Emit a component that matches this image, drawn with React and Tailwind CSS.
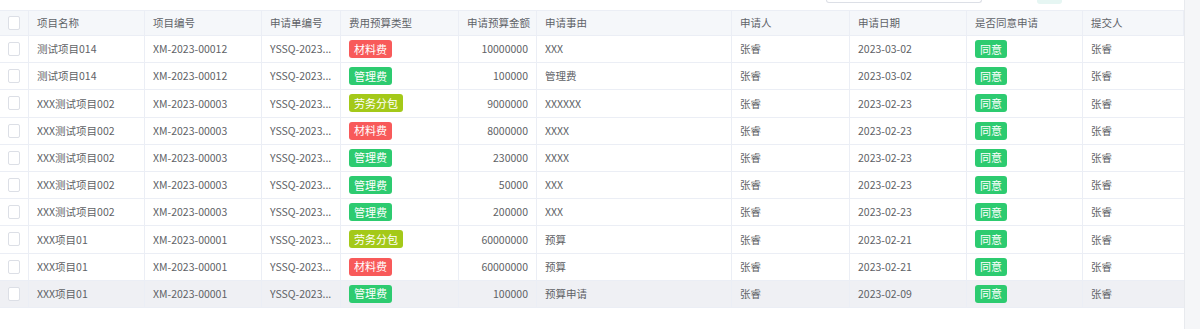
import React from 'react';

const COLS = 'grid grid-cols-[29px_116px_117px_79px_118px_78px_195px_118px_117px_116px_101px]';

const HEADERS = ['项目名称', '项目编号', '申请单编号', '费用预算类型', '申请预算金额', '申请事由', '申请人', '申请日期', '是否同意申请', '提交人'];

const TAG_STYLES = {
  材料费: 'bg-[#f85a5a]',
  管理费: 'bg-[#2dcb70]',
  劳务分包: 'bg-[#a4c919]',
};

const ROWS = [
  ['测试项目014', 'XM-2023-00012', '材料费', '10000000', 'XXX', '2023-03-02'],
  ['测试项目014', 'XM-2023-00012', '管理费', '100000', '管理费', '2023-03-02'],
  ['XXX测试项目002', 'XM-2023-00003', '劳务分包', '9000000', 'XXXXXX', '2023-02-23'],
  ['XXX测试项目002', 'XM-2023-00003', '材料费', '8000000', 'XXXX', '2023-02-23'],
  ['XXX测试项目002', 'XM-2023-00003', '管理费', '230000', 'XXXX', '2023-02-23'],
  ['XXX测试项目002', 'XM-2023-00003', '管理费', '50000', 'XXX', '2023-02-23'],
  ['XXX测试项目002', 'XM-2023-00003', '管理费', '200000', 'XXX', '2023-02-23'],
  ['XXX项目01', 'XM-2023-00001', '劳务分包', '60000000', '预算', '2023-02-21'],
  ['XXX项目01', 'XM-2023-00001', '材料费', '60000000', '预算', '2023-02-21'],
  ['XXX项目01', 'XM-2023-00001', '管理费', '100000', '预算申请', '2023-02-09'],
];

const Checkbox = () => (
  <span className="block w-[14px] h-[14px] rounded-[2px] border border-[#dcdfe6] bg-white" />
);

const Tag = ({ label, color }) => (
  <span className={`inline-flex items-center h-[18px] px-[5px] rounded-[3px] text-white text-[11px] leading-none ${color}`}>
    {label}
  </span>
);

const cell = 'flex items-center border-r border-[#ebeef5] px-[8px] overflow-hidden whitespace-nowrap';

export default function App() {
  return (
    <div
      className="flex w-[1200px] h-[329px] bg-white text-[10.5px] text-[#606266] overflow-hidden"
      style={{ fontFamily: '"Noto Sans CJK SC", "Noto Sans", sans-serif' }}
    >
      <div className="w-[1184px] flex flex-col">
        <div className="h-[10px] flex items-start">
          <div className="ml-[826px] w-[156px] h-[3px] border border-t-0 border-[#dcdfe6] rounded-b-[4px]" />
          <div className="ml-[55px] w-[25px] h-[4px] bg-[#e6f6f3] rounded-b-[3px]" />
        </div>

        <div className={`${COLS} h-[26px] bg-[#f5f7fa] border-y border-[#ebeef5] text-[#5f6368]`}>
          <div className={`${cell} justify-center px-0`}>
            <Checkbox />
          </div>
          {HEADERS.map((h) => (
            <div key={h} className={cell}>
              {h}
            </div>
          ))}
        </div>

        {ROWS.map((r, i) => (
          <div
            key={i}
            className={`${COLS} h-[27.2px] border-b border-[#ebeef5] ${i === ROWS.length - 1 ? 'bg-[#eff0f4]' : 'bg-white'}`}
          >
            <div className={`${cell} justify-center px-0`}>
              <Checkbox />
            </div>
            <div className={cell}>{r[0]}</div>
            <div className={cell}>{r[1]}</div>
            <div className={cell}>YSSQ-2023...</div>
            <div className={cell}>
              <Tag label={r[2]} color={TAG_STYLES[r[2]]} />
            </div>
            <div className={`${cell} justify-end`}>{r[3]}</div>
            <div className={cell}>{r[4]}</div>
            <div className={cell}>张睿</div>
            <div className={cell}>{r[5]}</div>
            <div className={cell}>
              <Tag label="同意" color="bg-[#2dcb70]" />
            </div>
            <div className={`${cell} border-r-0`}>张睿</div>
          </div>
        ))}
      </div>
      <div className="w-[16px] border-l border-[#e8eaee] bg-[#f5f6f8]" />
    </div>
  );
}
